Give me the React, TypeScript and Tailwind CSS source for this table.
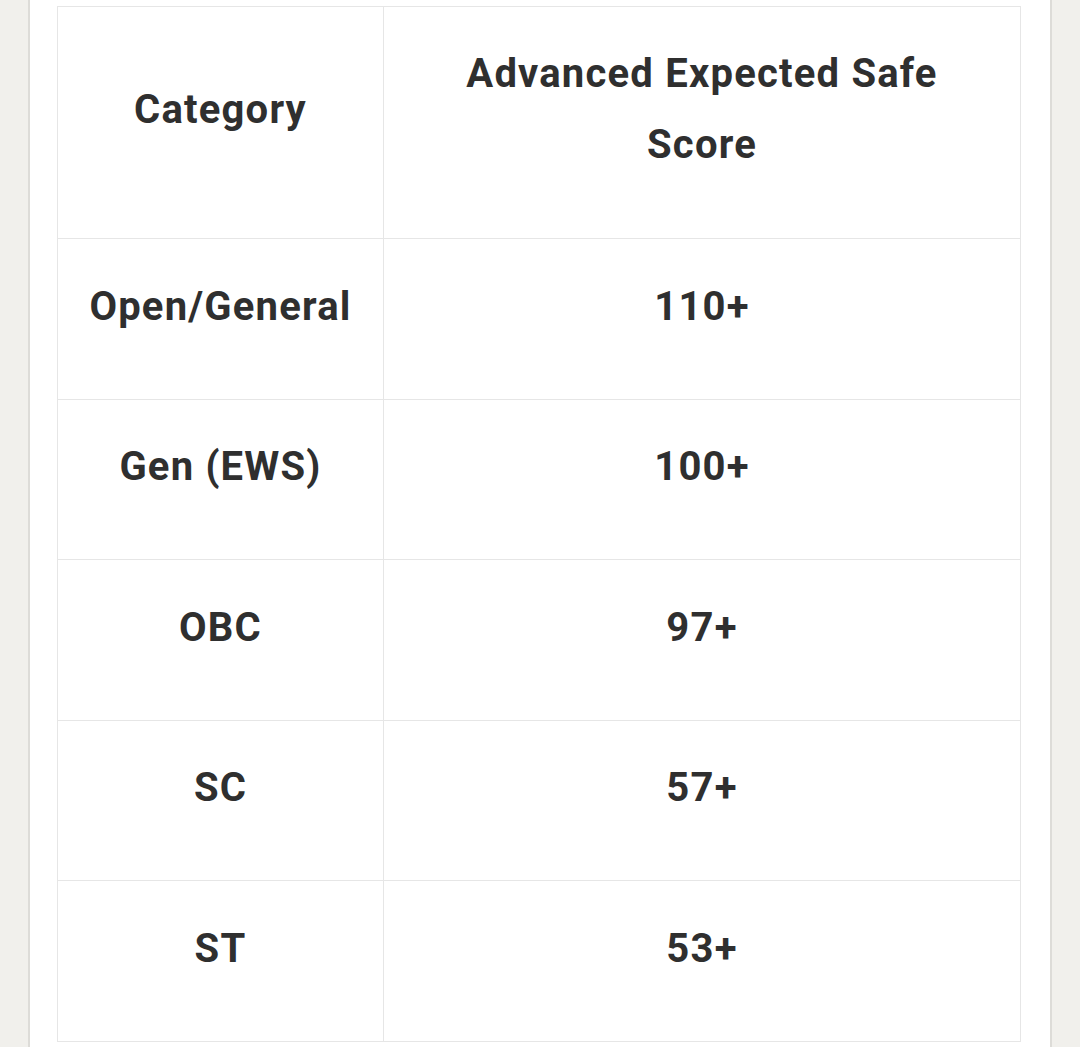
import React from 'react';

const rows = [
  { category: 'Open/General', score: '110+' },
  { category: 'Gen (EWS)', score: '100+' },
  { category: 'OBC', score: '97+' },
  { category: 'SC', score: '57+' },
  { category: 'ST', score: '53+' },
];

const App = () => {
  return (
    <div className="min-h-screen bg-[#f1f0ec] px-[28px]" style={{ fontFamily: 'Roboto, "Noto Sans", sans-serif' }}>
      <div className="min-h-screen bg-white border-x-2 border-[#dddcd8] pl-[27px] pr-[29px] pt-[6px]">
        <table className="w-full border-collapse table-fixed text-[#2f2f2f] font-bold text-[40px] tracking-[1.2px]">
          <colgroup>
            <col className="w-[326px]" />
            <col />
          </colgroup>
          <thead>
            <tr className="h-[232px]">
              <th className="border border-[#e6e6e6] text-center align-middle pb-[26px] leading-[71px]">
                Category
              </th>
              <th className="border border-[#e6e6e6] text-center align-middle pb-[28px] px-[60px] leading-[71px]">
                Advanced Expected Safe Score
              </th>
            </tr>
          </thead>
          <tbody>
            {rows.map((row) => (
              <tr key={row.category} className="h-[160.5px]">
                <td className="border border-[#e6e6e6] text-center align-middle pb-[25px] leading-[71px]">
                  {row.category}
                </td>
                <td className="border border-[#e6e6e6] text-center align-middle pb-[25px] leading-[71px]">
                  {row.score}
                </td>
              </tr>
            ))}
          </tbody>
        </table>
      </div>
    </div>
  );
};

export default App;
